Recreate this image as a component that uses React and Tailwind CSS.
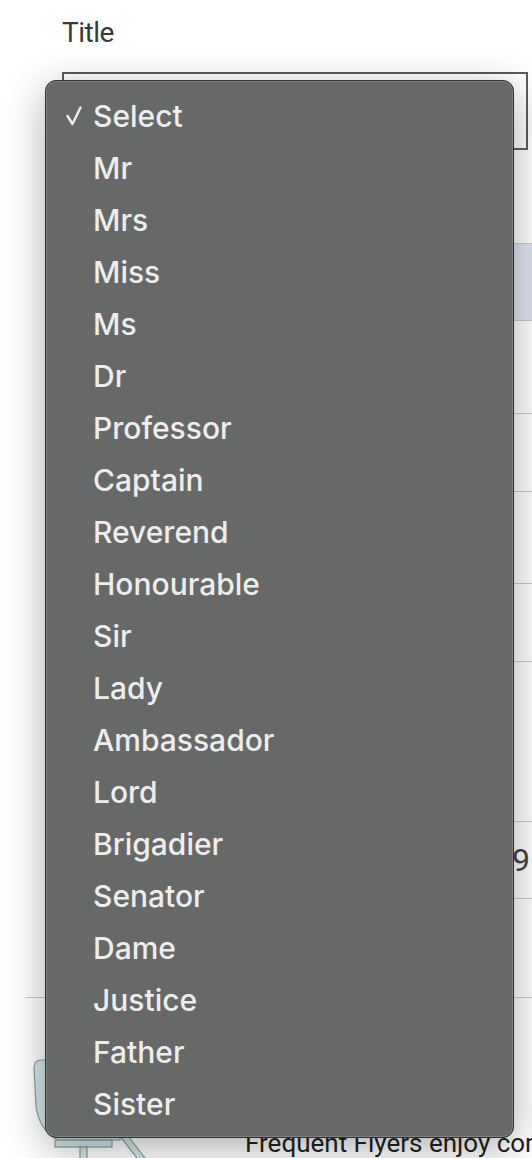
import React from 'react';

const titles = [
    'Select', 'Mr', 'Mrs', 'Miss', 'Ms', 'Dr', 'Professor', 'Captain', 'Reverend', 'Honourable',
    'Sir', 'Lady', 'Ambassador', 'Lord', 'Brigadier', 'Senator', 'Dame', 'Justice', 'Father', 'Sister',
];

const CheckMark = () => (
    <svg width="16" height="20" viewBox="0 0 16 20" fill="none">
        <path d="M1.5 10 L6.5 18 L14.5 1.5" stroke="#ededed" strokeWidth="2.4" strokeLinecap="round" strokeLinejoin="round" />
    </svg>
);

// mostly hidden behind the menu, only the edges show
const SeatIcon = () => (
    <svg width="120" height="101" viewBox="28 1058 120 101" fill="#d4e7e7" stroke="#8c9b9b" strokeWidth="1.2">
        <path d="M41 1060 Q34 1060 34 1068 L36 1106 Q39 1130 58 1140 L120 1140 L120 1060 Z" />
        <rect x="55" y="1140" width="57" height="7" />
        <rect x="80" y="1147" width="7" height="14" />
        <path d="M120 1136 L128 1136 L148 1162 L140 1162 Z" />
    </svg>
);

const rows = [
    { h: 'h-[77px]', bg: 'bg-[#dfe4ef]' },
    { h: 'h-[93px]', bg: '' },
    { h: 'h-[78px]', bg: '' },
    { h: 'h-[92px]', bg: '' },
    { h: 'h-[78px]', bg: '' },
    { h: 'h-[160px]', bg: '' },
    { h: 'h-[77px]', bg: '', text: '9' },
    { h: 'h-[99px]', bg: '' },
];

const App = () => {
    return (
        <div className="relative w-[532px] h-[1158px] overflow-hidden bg-white font-['Roboto',sans-serif]">
            {/* form behind the open menu */}
            <div className="pl-[62px] pt-[19px]">
                <label className="block text-[28px] leading-[28px] tracking-[-0.5px] text-[#3a3a3a]">Title</label>
                <div className="mt-[25px] w-[466px] h-[78px] border-2 border-[#5c5c5c] bg-white" />
            </div>

            <div className="mt-[93px] ml-[62px]">
                {rows.map((r, i) => (
                    <div key={i} className={`${r.h} ${r.bg} border-t border-[#c9c9c9] flex items-center justify-end pr-[2px]`}>
                        {r.text && <span className="text-[32px] text-[#444]">{r.text}</span>}
                    </div>
                ))}
            </div>
            <div className="ml-[25px] border-t border-[#c9c9c9]" />

            <div className="flex items-start">
                <div className="mt-[60px] ml-[28px] shrink-0">
                    <SeatIcon />
                </div>
                <div className="ml-[97px] mt-[130px] overflow-hidden">
                    <p className="whitespace-nowrap text-[26px] leading-[30px] text-[#222]">
                        Frequent Flyers enjoy com
                    </p>
                </div>
            </div>

            {/* native select menu */}
            <div className="absolute left-[45px] top-[80px] w-[469px] pt-[9px] pb-[7px] rounded-[11px] bg-[#676868] border border-[#2e2e2e] shadow-[0_10px_40px_rgba(0,0,0,0.32),inset_0_0_0_1px_rgba(255,255,255,0.16)] font-['Inter',sans-serif]">
                {titles.map((t, i) => (
                    <div key={t} className="flex items-center h-[52px]">
                        <div className="w-[47px] pl-[20px] flex items-center">
                            {i === 0 && <CheckMark />}
                        </div>
                        <span className="text-[30px] leading-[52px] font-medium text-[#ededed]">{t}</span>
                    </div>
                ))}
            </div>
        </div>
    );
};

export default App;
